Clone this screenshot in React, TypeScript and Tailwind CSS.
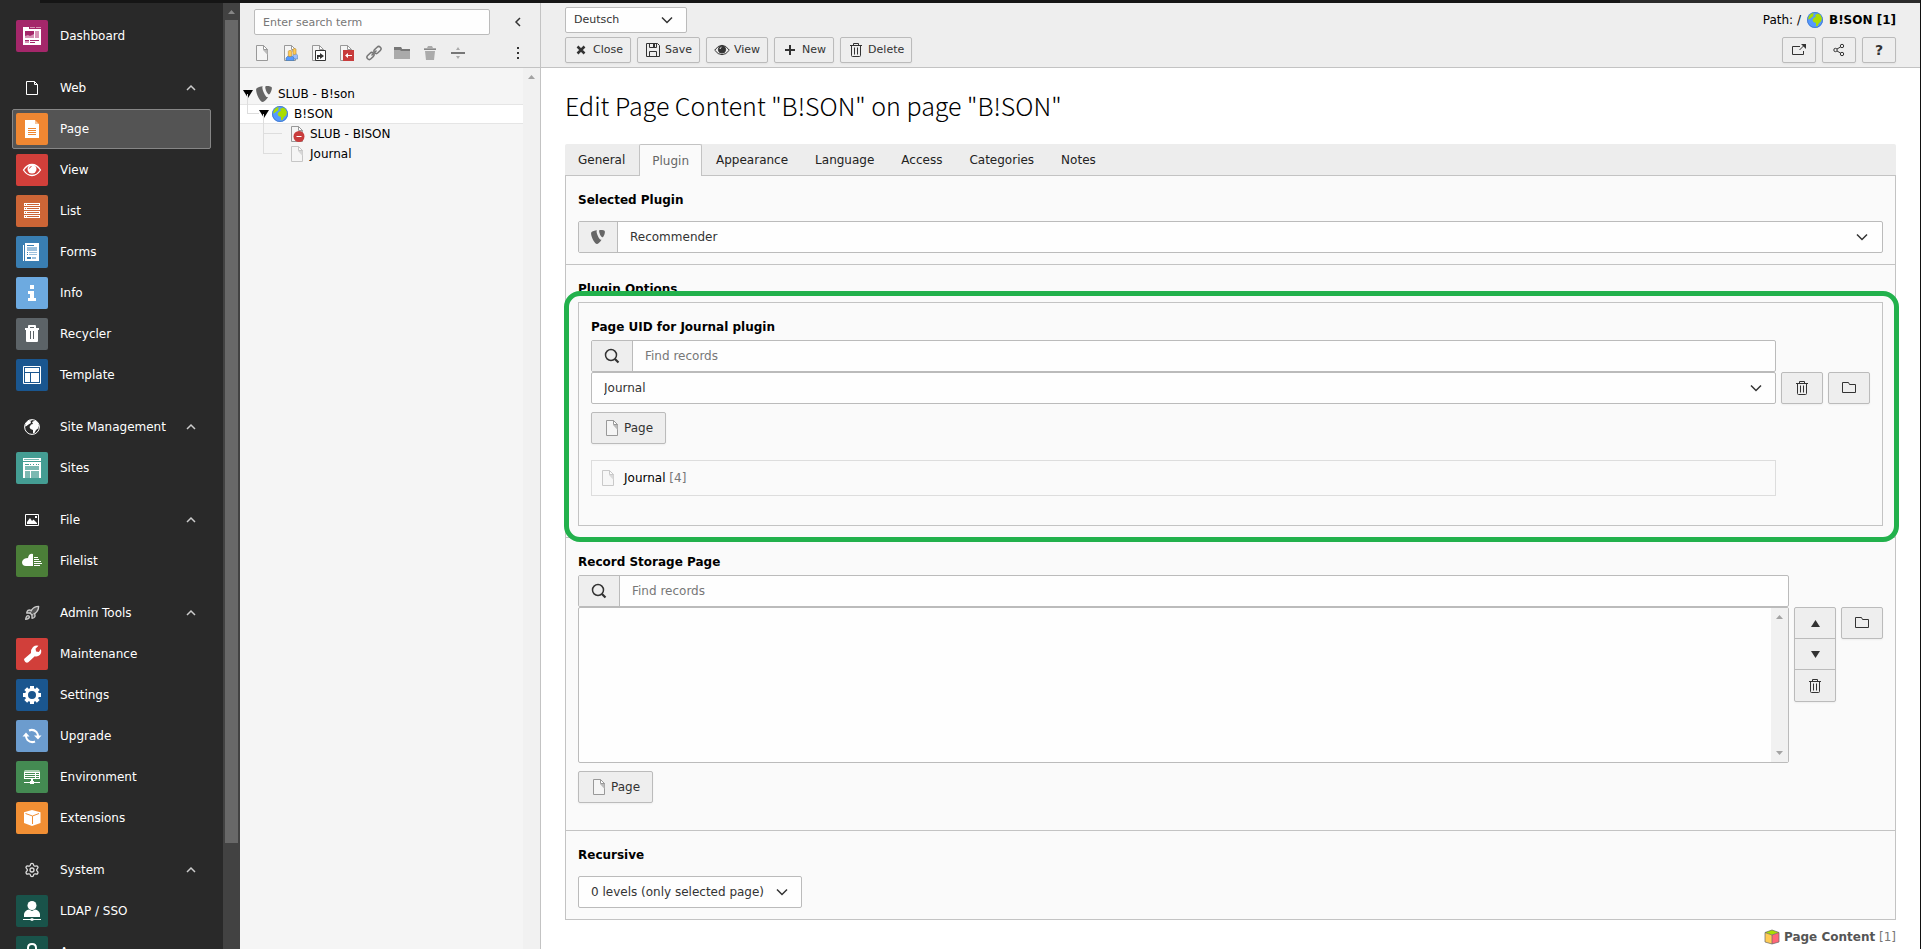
import { useState } from "react";
import type { ReactNode } from "react";
import { SiTypo3 } from "react-icons/si";
import { Rocket, Settings } from "lucide-react";

/* ---------- small icons ---------- */

const Chevron = ({ className, dir = "down" }: { className?: string; dir?: "up" | "down" | "left" }) => {
  const d = dir === "up" ? "M4 10l4-4 4 4" : dir === "left" ? "M10 4L6 8l4 4" : "M3 5.5l5 5 5-5";
  return (
    <svg viewBox="0 0 16 16" className={className} fill="none" stroke="currentColor" strokeWidth="1.5">
      <path d={d} />
    </svg>
  );
};

const Triangle = ({ className, up }: { className?: string; up?: boolean }) => (
  <svg viewBox="0 0 10 8" preserveAspectRatio="none" className={className} fill="currentColor">
    <path d={up ? "M5 0l5 8H0z" : "M0 0h10L5 8z"} />
  </svg>
);

const PageIcon = ({ className = "w-4 h-4", children }: { className?: string; children?: ReactNode }) => (
  <svg viewBox="0 0 16 16" className={className}>
    <path fill="#f5f5f5" stroke="#999" d="M2.5.5h7l4 4v11h-11z" />
    <path fill="#bbb" d="M9 5h4.5v5z" />
    <path fill="#fff" stroke="#999" d="M9.5.5v4h4z" />
    {children}
  </svg>
);

const Globe = ({ className = "w-4 h-4" }: { className?: string }) => (
  <svg viewBox="0 0 16 16" className={className}>
    <circle cx="8" cy="8" r="8" fill="#59f" />
    <circle cx="8" cy="8" r="7.5" fill="none" stroke="#4a7fd0" />
    <path fill="#ad0" d="M2 4l2.500-2.500L7.500 1.200 6 2.500 6.500 4 4.500 5.500 2.500 7 1 7.500z" />
    <path fill="#ad0" d="M8 3l3-1.500 2.500 1.500L15 6.500l-1 3-2 1.500-1.500 3-1.500.3V11L6.500 10 5.500 8l1.500-2.500 2-.5z" />
  </svg>
);

const Trash = ({ className = "w-4 h-4" }: { className?: string }) => (
  <svg viewBox="0 0 16 16" className={className} fill="none" stroke="currentColor">
    <path d="M2 3.5h12M5.5 3V1.5h5V3M3.5 4v9.500q0 1 1 1h7q1 0 1-1V4M6.5 5.5v7M9.5 5.5v7" />
  </svg>
);

const Folder = () => (
  <svg viewBox="0 0 16 16" className="w-4 h-4" fill="none" stroke="currentColor">
    <path d="M1.5 12.5v-10h6l1 2h6v8z" />
  </svg>
);

const Search = () => (
  <svg viewBox="0 0 16 16" className="w-4 h-4" fill="none" stroke="currentColor">
    <circle cx="7" cy="7" r="5.5" strokeWidth="1.5" />
    <path d="M11 11l3.5 3.5" strokeWidth="2.2" />
  </svg>
);

const Close = () => (
  <svg viewBox="0 0 16 16" className="w-4 h-4" stroke="currentColor" strokeWidth="2.5">
    <path d="M4.5 4.5l7 7M11.5 4.5l-7 7" />
  </svg>
);

const Save = () => (
  <svg viewBox="0 0 16 16" className="w-4 h-4" fill="none" stroke="currentColor">
    <path d="M1.5 1.5h11l2 2v11h-13zM4.5 1.5v4h7v-4M4.5 14.5v-5h7v5" />
    <path fill="currentColor" stroke="none" d="M8 2h2v3H8z" />
  </svg>
);

const Eye = () => (
  <svg viewBox="0 0 16 16" className="w-4 h-4" fill="none" stroke="currentColor">
    <path d="M.7 8.2Q4 3.300 8 3.300t7.300 4.900Q12 12.700 8 12.700T.7 8.200z" />
    <circle cx="8" cy="7.5" r="3.6" fill="currentColor" />
    <path stroke="#eee" d="M6 7q.2-1.500 1.500-1.800" />
  </svg>
);

const Plus = () => (
  <svg viewBox="0 0 16 16" className="w-4 h-4" stroke="currentColor" strokeWidth="2">
    <path d="M8 3v10M3 8h10" />
  </svg>
);

const OpenExternal = () => (
  <svg viewBox="0 0 16 16" className="w-4 h-4" fill="none" stroke="currentColor">
    <path d="M9 4.5H1.5v8h11V9M8.5 8L13 3.5" />
    <path fill="currentColor" stroke="none" d="M10 2h5v5z" />
  </svg>
);

const Share = () => (
  <svg viewBox="0 0 16 16" className="w-4 h-4" fill="none" stroke="currentColor">
    <circle cx="4.5" cy="8" r="1.7" />
    <circle cx="11" cy="4" r="1.7" />
    <circle cx="11" cy="12" r="1.7" />
    <path d="M6 7l3.5-2M6 9l3.5 2" />
  </svg>
);

const ContentBox = () => (
  <svg viewBox="0 0 16 16" className="w-4 h-4">
    <path fill="#ad0" d="M8 1l7 2.5L8 6 1 3.500z" />
    <path fill="#fc5" d="M1 3.5L8 6v9l-7-2z" />
    <path fill="#f67" d="M15 3.5L8 6v9l7-2z" />
    <path fill="none" stroke="#666" strokeOpacity=".7" d="M1 3.5L8 1l7 2.5V13l-7 2-7-2zL8 6l7-2.500M8 6v9" />
  </svg>
);

/* ---------- module icons, drawn on a 32px tile ---------- */

const tiles: Record<string, { bg: string; art: ReactNode }> = {
  dashboard: {
    bg: "#a4276a",
    art: (
      <>
        <path fill="#fff" d="M7 7h6v2h12v16H7z" />
        <path fill="#d693b5" d="M14 7h5v1h-5zM20 7h5v1h-5zM9 14h9v4H9zM19 11h4v7h-4zM9 21h4v2H9z" />
        <path fill="#a4276a" d="M9 11h9v3l-2 1-2 1-2-1-3 1zM9 20h4v1H9zM14 20h9v1h-9zM14 22h5v1h-5z" />
      </>
    ),
  },
  page: {
    bg: "#ef8732",
    art: (
      <>
        <path fill="#fff" d="M9 7h10v4h4v14H9z" />
        <path fill="#f7c398" d="M19 7l4 4h-4z" />
        <path fill="#ef8732" d="M12 15h8v1h-8zM12 17h8v1h-8zM12 19h8v1h-8zM12 21h8v1h-8z" />
      </>
    ),
  },
  view: {
    bg: "#d13f3a",
    art: (
      <>
        <path fill="none" stroke="#fff" strokeWidth="1.3" d="M7.5 16Q11 10.500 16 10.500t8.500 5.500Q21 21.500 16 21.500T7.500 16z" />
        <circle cx="16" cy="15" r="4.5" fill="#fff" />
        <path fill="none" stroke="#d13f3a" d="M13.5 14.5q0-1.500 2-2" />
      </>
    ),
  },
  list: {
    bg: "#cc6536",
    art: (
      <>
        <path fill="#fff" d="M8 8h16v3H8zM8 12h16v3H8zM8 16h16v3H8zM8 20h16v3H8z" />
        <path fill="#cc6536" d="M9 9h1v1H9zM11 9h12v1H11zM9 13h1v1H9zM11 13h12v1H11zM9 17h1v1H9zM11 17h12v1H11zM9 21h1v1H9zM11 21h12v1H11z" />
      </>
    ),
  },
  forms: {
    bg: "#397eb2",
    art: (
      <>
        <path fill="#fff" d="M9 7h14v18H9zM7 9h1v16H7z" />
        <path fill="#397eb2" d="M11 9h7v1h-7zM11 16h1v1h-1zM11 18h1v1h-1zM11 21h4v2h-4z" />
        <path fill="#9cc0dc" d="M11 11h10v4H11zM13 16h8v1h-8zM13 18h8v1h-8zM16 21h4v2h-4z" />
      </>
    ),
  },
  info: {
    bg: "#6daae0",
    art: <path fill="#fff" d="M14 8h4v4h-4zM12 14h6v7h2v3h-8v-3h2v-4h-2z" />,
  },
  recycler: {
    bg: "#5c6367",
    art: (
      <>
        <path fill="#fff" d="M9 10h3V8q0-1 1-1h6q1 0 1 1v2h3v2H9zM10 12h12v11q0 1-1 1H11q-1 0-1-1z" />
        <path fill="#5c6367" d="M14 9h4v1h-4zM14 13h1v8h-1zM17 13h1v8h-1z" />
      </>
    ),
  },
  template: {
    bg: "#1a568f",
    art: (
      <>
        <path fill="none" stroke="#fff" d="M7.5 7.5h17v17h-17z" />
        <path fill="#fff" d="M9 9h14v4H9zM9 14h5v9H9zM15 14h8v9h-8z" />
      </>
    ),
  },
  sites: {
    bg: "#449d93",
    art: (
      <>
        <path fill="#fff" d="M7 6h18v20H7z" />
        <path fill="#449d93" d="M8 7h15v1H8zM7 9h18v1H7zM9 12h4v1H9zM14 12h1v1h-1zM17 12h1v1h-1zM20 12h1v1h-1zM22 12h1v1h-1z" />
        <path fill="#7cb9b2" d="M8 7h15v1H8zM9 14h14v4H9zM9 19h5v7H9zM15 19h8v7h-8z" />
      </>
    ),
  },
  filelist: {
    bg: "#4b7e38",
    art: (
      <>
        <path fill="#fff" d="M17 9q-4-1-5 4-5 0-6 4 0 4 4 4h7z" />
        <path fill="#fff" d="M18 12h4v1h-4zM18 14h5v1h-5zM18 16h7v1h-7zM18 18h8v1h-8zM18 20h6v1h-6z" />
      </>
    ),
  },
  maintenance: {
    bg: "#d13f3a",
    art: (
      <path fill="#fff" d="M8 21l7-6q-.5-3.500 2-6 2.500-2 5.500-1.200l-3 3 .6 2.600 2.700.6 2-3q1.300 3.500-1 6-2 2-5 1.300l-6.500 6q-1.500 1-3-.3Q8 22.500 8 21z" />
    ),
  },
  settings: {
    bg: "#1a568f",
    art: (
      <>
        <path fill="none" stroke="#fff" strokeWidth="4" d="M16 7v4M16 21v4M7 16h4M21 16h4M9.7 9.7l3 3M19.3 19.3l3 3M22.3 9.7l-3 3M12.7 19.3l-3 3" />
        <circle cx="16" cy="16" r="5.5" fill="none" stroke="#fff" strokeWidth="3" />
      </>
    ),
  },
  upgrade: {
    bg: "#6c9cce",
    art: (
      <>
        <path fill="none" stroke="#fff" strokeWidth="2" d="M13 10.5q4-1.800 7.500 1.500 1.500 2 1.500 4M19 21.500q-4 1.800-7.500-1.500-1.500-2-1.500-4" />
        <path fill="#fff" d="M18 15.5h7.500L22 19.500zM6.500 16.500h7L10 12.500z" />
      </>
    ),
  },
  environment: {
    bg: "#448a52",
    art: (
      <>
        <path fill="#a7cfae" d="M9 9h14l1 1v1H8v-1z" />
        <path fill="#fff" d="M8 11h16v7h-7v2h1v1h6v1h-6v1h-4v-1H8v-1h6v-1h1v-2H8z" />
        <path fill="#448a52" d="M9 12h10v1H9zM20 12h3v1h-3zM9 14h10v1H9zM20 14h3v1h-3zM9 16h10v1H9zM20 16h3v1h-3z" />
      </>
    ),
  },
  extensions: {
    bg: "#f18f34",
    art: (
      <>
        <path fill="#fff" d="M16 8l8.500 2.200V21L16 24l-8-3V10.200z" />
        <path fill="none" stroke="#f18f34" d="M9.5 11.5l7 2.500 6.500-2.500M16.500 14v8" />
      </>
    ),
  },
  ldap: {
    bg: "#19534a",
    art: (
      <>
        <circle cx="16" cy="10.5" r="4.5" fill="#fff" />
        <path fill="#fff" d="M8 22v-3q1-4 5-4.500l3 1.500 3-1.500q4 .5 5 4.500v3zM7 24h7l2-1 2 1h7v1h-7l-2 1-2-1H7z" />
      </>
    ),
  },
  access: {
    bg: "#19534a",
    art: (
      <>
        <path fill="none" stroke="#fff" strokeWidth="2" d="M12 15v-3q0-4 4-4t4 4v3" />
        <path fill="#fff" d="M10 15h12v9H10z" />
      </>
    ),
  },
};

const groupIcons: Record<string, ReactNode> = {
  web: (
    <svg viewBox="0 0 16 16" className="w-4 h-4" fill="none" stroke="#fff">
      <path d="M2.5 1.5h8l3 3v10h-11zM10.5 1.5v3h3" />
    </svg>
  ),
  site: (
    <svg viewBox="0 0 16 16" className="w-4 h-4">
      <circle cx="8" cy="8" r="7.4" fill="none" stroke="#fff" />
      <path fill="#fff" d="M2 4l2.500-2.500L8 1 6.500 2.500 7 4 4.500 5.500 2.500 7 1 7.500zM8 3l3-1.500L13.500 3 15 6.500l-1 3-2 1.500-1.500 3-1.500.3V11L6.500 10 5.500 8 7 5.500 9 5z" />
    </svg>
  ),
  file: (
    <svg viewBox="0 0 16 16" className="w-4 h-4">
      <path fill="none" stroke="#fff" d="M1.5 2.5h13v11h-13z" />
      <path fill="#fff" d="M3 12v-2l3-4 2 3 1.5-1.500L13 11v1zM11 4h2v2h-2z" />
    </svg>
  ),
  tools: <Rocket className="w-4 h-4 text-[#ccc] fill-[#555]" strokeWidth={2} />,
  system: <Settings className="w-4 h-4 text-[#ddd]" strokeWidth={2} />,
};

const menu = [
  { items: [{ icon: "dashboard", label: "Dashboard" }] },
  {
    title: "Web",
    icon: "web",
    items: [
      { icon: "page", label: "Page", active: true },
      { icon: "view", label: "View" },
      { icon: "list", label: "List" },
      { icon: "forms", label: "Forms" },
      { icon: "info", label: "Info" },
      { icon: "recycler", label: "Recycler" },
      { icon: "template", label: "Template" },
    ],
  },
  { title: "Site Management", icon: "site", items: [{ icon: "sites", label: "Sites" }] },
  { title: "File", icon: "file", items: [{ icon: "filelist", label: "Filelist" }] },
  {
    title: "Admin Tools",
    icon: "tools",
    items: [
      { icon: "maintenance", label: "Maintenance" },
      { icon: "settings", label: "Settings" },
      { icon: "upgrade", label: "Upgrade" },
      { icon: "environment", label: "Environment" },
      { icon: "extensions", label: "Extensions" },
    ],
  },
  {
    title: "System",
    icon: "system",
    items: [
      { icon: "ldap", label: "LDAP / SSO" },
      { icon: "access", label: "Access" },
    ],
  },
] as { title?: string; icon?: string; items: { icon: string; label: string; active?: boolean }[] }[];

function ModuleMenu() {
  return (
    <aside className="w-60 shrink-0 flex bg-[#292929] text-white">
      <nav className="flex-1 min-w-0 overflow-hidden pl-3 pr-3 pt-[13px] flex flex-col gap-3">
        {menu.map((group, i) => (
          <div key={i} className="flex flex-col gap-px shrink-0">
            {group.title && (
              <button type="button" className="h-10 flex items-center gap-3 pl-1 pr-3 text-left">
                <span className="w-8 flex justify-center">{groupIcons[group.icon!]}</span>
                <span className="flex-1">{group.title}</span>
                <Chevron dir="up" className="w-4 h-4 text-[#ccc]" />
              </button>
            )}
            {group.items.map((item) => (
              <a
                key={item.label}
                href="#"
                className={
                  item.active
                    ? "h-10 flex items-center gap-3 pl-[3px] border border-[#868686] bg-[#545454] rounded-xs"
                    : "h-10 flex items-center gap-3 pl-1"
                }
              >
                <svg viewBox="0 0 32 32" className="w-8 h-8 rounded-xs">
                  <rect width="32" height="32" fill={tiles[item.icon].bg} />
                  {tiles[item.icon].art}
                </svg>
                <span>{item.label}</span>
              </a>
            ))}
          </div>
        ))}
      </nav>
      <div className="w-[17px] bg-[#424242] flex flex-col items-center">
        <Triangle up className="w-[7px] h-1 mt-[7px] mb-1.5 text-[#868686]" />
        <div className="w-[13px] h-[87%] bg-[#686868]" />
      </div>
    </aside>
  );
}

/* ---------- page tree ---------- */

const dragIcons: { label: string; icon: ReactNode }[] = [
  { label: "Standard", icon: <PageIcon /> },
  {
    label: "Backend user section",
    icon: (
      <PageIcon>
        <path fill="#9bf" stroke="#58a" strokeWidth=".6" d="M11 14V9.500l1-1h2l1.700 2V14z" />
        <path fill="#59f" stroke="#47a" strokeWidth=".6" d="M4 15.600V13l2-2h4l2 2v2.600z" />
        <path fill="#fc5" stroke="#b83" strokeWidth=".6" d="M6.300 6.500q0-1 1.700-1t1.700 1v4q0 1-1.700 1t-1.700-1zM11 4.500q0-1 1.500-1t1.500 1v4q0 1-1.500 1t-1.500-1z" />
      </PageIcon>
    ),
  },
  {
    label: "Shortcut",
    icon: (
      <PageIcon>
        <path fill="#fff" stroke="#333" d="M5.5 5.5h10v10h-10z" />
        <path fill="#333" d="M7 14v-4h3V8l4 3-4 3v-2H8.500v2z" />
      </PageIcon>
    ),
  },
  {
    label: "Mount point",
    icon: (
      <PageIcon>
        <path fill="#c83c3c" d="M5 5h11v11H5z" />
        <path fill="#fff" d="M7 10.5l3-2.500v2h4v1h-4v2z" />
      </PageIcon>
    ),
  },
  {
    label: "Link",
    icon: (
      <svg viewBox="0 0 16 16" className="w-4 h-4" fill="none" stroke="#777" strokeWidth="1.5">
        <rect x="7.5" y="2.7" width="8" height="4.6" rx="2.3" transform="rotate(-45 11.500 5)" />
        <rect x=".5" y="8.700" width="8" height="4.600" rx="2.300" transform="rotate(-45 4.500 11)" />
        <path d="M5.500 10.500l5-5" />
      </svg>
    ),
  },
  {
    label: "Folder",
    icon: (
      <svg viewBox="0 0 16 16" className="w-4 h-4">
        <path fill="#aaa" d="M0 2h7l1 2h8v10H0z" />
        <path fill="#777" d="M0 2h7l1 2h8v2H7L6 5H0z" />
      </svg>
    ),
  },
  {
    label: "Recycler",
    icon: (
      <svg viewBox="0 0 16 16" className="w-4 h-4" fill="#aaa">
        <path d="M2 3h3l1-2h4l1 2h3v2H2zM3 6h10l-1 9H4z" />
        <path fill="#888" d="M2 4h12v1H2z" />
      </svg>
    ),
  },
  {
    label: "Menu separator",
    icon: (
      <svg viewBox="0 0 16 16" className="w-4 h-4" fill="#777">
        <path d="M1 7h14v2H1z" />
        <path fill="#aaa" d="M8 2l2 3H6zM8 14l2-3H6z" />
      </svg>
    ),
  },
];

function PageTree() {
  return (
    <section className="w-[301px] shrink-0 flex flex-col border-r border-[#c3c3c3]">
      <div className="h-[65px] shrink-0 bg-[#eee] border-b border-[#c3c3c3] px-3.5 pt-1.5">
        <div className="flex items-center justify-between">
          <input
            type="search"
            aria-label="Search page tree"
            placeholder="Enter search term"
            className="w-[236px] h-[26px] px-2 text-[11px] bg-[#fefefe] border border-[#bbb] rounded-xs placeholder-[#777] outline-none"
          />
          <button type="button" aria-label="Collapse page tree">
            <Chevron dir="left" className="w-4 h-4 text-[#333]" />
          </button>
        </div>
        <div className="flex items-center gap-3 mt-2.5">
          {dragIcons.map((d) => (
            <button key={d.label} type="button" aria-label={d.label} className="w-4 h-4">
              {d.icon}
            </button>
          ))}
          <button type="button" aria-label="Open page tree options" className="ml-auto w-4 h-4">
            <svg viewBox="0 0 16 16" className="w-4 h-4" fill="#333">
              <path d="M7 2h2v2H7zM7 7h2v2H7zM7 12h2v2H7z" />
            </svg>
          </button>
        </div>
      </div>
      <div className="flex-1 flex bg-[#f5f5f5] text-black">
        <ul className="flex-1 pt-4">
          <li className="h-5 flex items-center pl-[3px]">
            <Triangle className="w-2.5 h-2 mr-[3px]" />
            <SiTypo3 className="w-4 h-4 text-[#666]" />
            <span className="ml-1.5">SLUB - B!son</span>
          </li>
          <li className="h-5 flex items-center bg-white border-y border-[#e5e5e5]">
            <span className="w-3 h-5 ml-[7px] -mt-5 border-l border-b border-[#ddd]" />
            <Triangle className="w-2.5 h-2 mr-[3px]" />
            <Globe />
            <span className="ml-1.5">B!SON</span>
          </li>
          <li className="h-5 flex items-center">
            <span className="w-[19px] h-5 ml-[23px] -mt-5 border-l border-b border-[#ddd]" />
            <span className="ml-[7px]">
              <PageIcon>
                <circle cx="10" cy="10.5" r="5.5" fill="#c83c3c" />
                <path stroke="#fff" d="M7.5 10.5h5" />
              </PageIcon>
            </span>
            <span className="ml-[5px]">SLUB - BISON</span>
          </li>
          <li className="h-5 flex items-center">
            <span className="w-[19px] h-5 ml-[23px] -mt-5 border-l border-b border-[#ddd]" />
            <span className="ml-[7px] opacity-50">
              <PageIcon />
            </span>
            <span className="ml-[5px]">Journal</span>
          </li>
        </ul>
        <div className="w-[17px] bg-[#f1f1f1] flex flex-col items-center">
          <Triangle up className="w-[7px] h-1 mt-[7px] text-[#a3a3a3]" />
        </div>
      </div>
    </section>
  );
}

/* ---------- form parts ---------- */

const toolButton =
  "h-[26px] px-[7px] flex items-center justify-center gap-1 text-[11px] text-[#333] bg-[#eee] border border-[#bbb] rounded-xs shadow-xs";
const toolIconButton =
  "w-[34px] h-[26px] flex items-center justify-center text-[#333] bg-[#eee] border border-[#bbb] rounded-xs shadow-xs";
const iconButton =
  "w-[42px] h-8 flex items-center justify-center text-[#333] bg-[#eee] border border-[#bbb] rounded-xs shadow-xs";

function RecordSearch({ id }: { id: string }) {
  return (
    <div className="h-8 flex border border-[#bbb] rounded-xs bg-[#fefefe] overflow-hidden">
      <label htmlFor={id} aria-label="Find records" className="w-[41px] flex items-center justify-center bg-[#eee] border-r border-[#bbb] text-[#333]">
        <Search />
      </label>
      <input id={id} type="search" placeholder="Find records" className="flex-1 min-w-0 px-3 placeholder-[#777] outline-none" />
    </div>
  );
}

function PageButton() {
  return (
    <button type="button" className="mt-2 h-8 px-3 flex items-center gap-1 text-[#333] bg-[#eee] border border-[#bbb] rounded-xs shadow-xs">
      <PageIcon />
      Page
    </button>
  );
}

const tabs = ["General", "Plugin", "Appearance", "Language", "Access", "Categories", "Notes"];

export default function App() {
  const [tab, setTab] = useState("Plugin");

  return (
    <div className="h-screen flex flex-col overflow-hidden border-r border-[#111] bg-white text-[12px] leading-[18px] text-[#333] font-['DejaVu_Sans',Verdana,sans-serif]">
      {/* Window edge */}
      <div className="h-[3px] shrink-0 flex">
        <div className="w-10 bg-[#292929]" />
        <div className="flex-1 bg-[#151515]" />
        <div className="w-[300px] bg-[#2b2b2b]" />
      </div>

      <div className="flex-1 min-h-0 flex">
        <ModuleMenu />
        <PageTree />

        <main className="flex-1 min-w-0 flex flex-col">
          {/* Doc header */}
          <header className="h-[65px] shrink-0 bg-[#eee] border-b border-[#c3c3c3] px-6 pt-1 flex flex-col gap-1">
            <div className="flex justify-between items-center">
              <div className="relative w-[122px]">
                <select aria-label="Language" className="appearance-none w-full h-[26px] px-2 text-[11px] bg-[#fefefe] border border-[#bbb] rounded-xs">
                  <option>Deutsch</option>
                </select>
                <Chevron className="absolute right-3 top-[5px] w-4 h-4 pointer-events-none" />
              </div>
              <div className="flex items-center gap-1.5 text-black">
                <span>Path: /</span>
                <Globe />
                <strong>B!SON [1]</strong>
              </div>
            </div>
            <div className="flex justify-between">
              <div className="flex gap-1.5">
                <button type="button" className={toolButton}><Close />Close</button>
                <button type="button" className={toolButton}><Save />Save</button>
                <button type="button" className={toolButton}><Eye />View</button>
                <button type="button" className={toolButton}><Plus />New</button>
                <button type="button" className={toolButton}><Trash />Delete</button>
              </div>
              <div className="flex gap-1.5">
                <button type="button" aria-label="Open in new window" className={toolIconButton}><OpenExternal /></button>
                <button type="button" aria-label="Share" className={toolIconButton}><Share /></button>
                <button type="button" aria-label="Help" className={toolIconButton}><span className="text-sm font-bold">?</span></button>
              </div>
            </div>
          </header>

          <div className="flex-1 min-h-0 px-6 pt-[19px]">
            <h1 className="h-9 mb-[21px] text-[25px] leading-9 font-light text-black font-['Noto_Sans_CJK_JP',sans-serif]">
              Edit Page Content "B!SON" on page "B!SON"
            </h1>

            <div role="tablist" className="h-8 flex gap-px bg-[#ededed] border-b border-[#c3c3c3] rounded-t-xs">
              {tabs.map((t) => (
                <button
                  key={t}
                  type="button"
                  role="tab"
                  aria-selected={t === tab}
                  onClick={() => setTab(t)}
                  className={
                    t === tab
                      ? "h-8 px-3 border border-b-0 border-[#c3c3c3] bg-[#fafafa] text-[#666] rounded-t-xs"
                      : "h-8 px-[13px] text-[#222]"
                  }
                >
                  {t}
                </button>
              ))}
            </div>

            <form className="bg-[#fafafa] border border-t-0 border-[#c3c3c3]">
              {/* Selected plugin */}
              <div className="px-3 pt-[15px] pb-[11px] border-b border-[#c3c3c3]">
                <label htmlFor="plugin" className="block font-bold text-black">Selected Plugin</label>
                <div className="relative mt-3 h-8 flex border border-[#bbb] rounded-xs bg-[#fefefe] overflow-hidden">
                  <span className="w-[39px] flex items-center justify-center bg-[#eee] border-r border-[#bbb]">
                    <SiTypo3 className="w-3.5 h-3.5 text-[#666]" />
                  </span>
                  <select id="plugin" className="appearance-none flex-1 px-3">
                    <option>Recommender</option>
                  </select>
                  <Chevron className="absolute right-3 top-[7px] w-4 h-4 pointer-events-none" />
                </div>
              </div>

              {/* Plugin options */}
              <div className="relative px-3 pt-[15px] pb-[11px] border-b border-[#c3c3c3]">
                <span className="block font-bold text-black">Plugin Options</span>
                <div className="mt-1 border border-[#c3c3c3] px-3 pt-[15px] pb-[29px]">
                  <label htmlFor="find-journal" className="block font-bold text-black">Page UID for Journal plugin</label>
                  <div className="mt-1 flex items-start gap-[5px]">
                    <div className="flex-1">
                      <RecordSearch id="find-journal" />
                      <div className="relative">
                        <select aria-label="Page UID for Journal plugin" className="appearance-none block w-full h-8 px-3 bg-[#fefefe] border border-[#bbb] rounded-xs">
                          <option>Journal</option>
                        </select>
                        <Chevron className="absolute right-3 top-2 w-4 h-4 pointer-events-none" />
                      </div>
                      <PageButton />
                      <div className="mt-4 h-9 flex items-center gap-2 px-2 border border-[#ddd] text-black">
                        <span className="opacity-50"><PageIcon /></span>
                        <span>
                          Journal <span className="text-[#777]">[4]</span>
                        </span>
                      </div>
                    </div>
                    <button type="button" aria-label="Remove selected" className={iconButton + " mt-8"}><Trash /></button>
                    <button type="button" aria-label="Browse records" className={iconButton + " mt-8"}><Folder /></button>
                  </div>
                </div>
                {/* highlight frame */}
                <div className="absolute -left-0.5 -right-1 top-[26px] -bottom-[5px] border-[5px] border-[#22b14c] rounded-2xl pointer-events-none" />
              </div>

              {/* Storage page */}
              <div className="px-3 pt-[15px] pb-[27px] border-b border-[#c3c3c3]">
                <label htmlFor="find-storage" className="block font-bold text-black">Record Storage Page</label>
                <div className="mt-1 flex items-start gap-[5px]">
                  <div className="flex-1">
                    <RecordSearch id="find-storage" />
                    <div className="h-[156px] flex border border-[#bbb] rounded-xs bg-[#fefefe]">
                      <select multiple aria-label="Record Storage Page" className="flex-1 overflow-hidden outline-none" />
                      <div className="w-[17px] py-[7px] flex flex-col items-center justify-between bg-[#f1f1f1] text-[#a3a3a3]">
                        <Triangle up className="w-[7px] h-1" />
                        <Triangle className="w-[7px] h-1" />
                      </div>
                    </div>
                    <PageButton />
                  </div>
                  <div className="mt-8 flex flex-col border border-[#bbb] rounded-xs bg-[#eee] text-[#333] shadow-xs divide-y divide-[#bbb]">
                    <button type="button" aria-label="Move up" className="w-10 h-[31px] flex items-center justify-center"><Triangle up className="w-[9px] h-[7px]" /></button>
                    <button type="button" aria-label="Move down" className="w-10 h-[31px] flex items-center justify-center"><Triangle className="w-[9px] h-[7px]" /></button>
                    <button type="button" aria-label="Remove" className="w-10 h-[31px] flex items-center justify-center"><Trash /></button>
                  </div>
                  <button type="button" aria-label="Browse pages" className={iconButton + " mt-8"}><Folder /></button>
                </div>
              </div>

              {/* Recursive */}
              <div className="px-3 pt-[15px] pb-[11px]">
                <label htmlFor="recursive" className="block font-bold text-black">Recursive</label>
                <div className="relative mt-3 w-56">
                  <select id="recursive" className="appearance-none block w-full h-8 px-3 bg-[#fefefe] border border-[#bbb] rounded-xs">
                    <option>0 levels (only selected page)</option>
                  </select>
                  <Chevron className="absolute right-3 top-2 w-4 h-4 pointer-events-none" />
                </div>
              </div>
            </form>

            <div className="mt-2 flex items-center justify-end gap-1 text-[#555]">
              <ContentBox />
              <span>
                <strong>Page Content</strong> <span className="text-[#777]">[1]</span>
              </span>
            </div>
          </div>
        </main>
      </div>
    </div>
  );
}
